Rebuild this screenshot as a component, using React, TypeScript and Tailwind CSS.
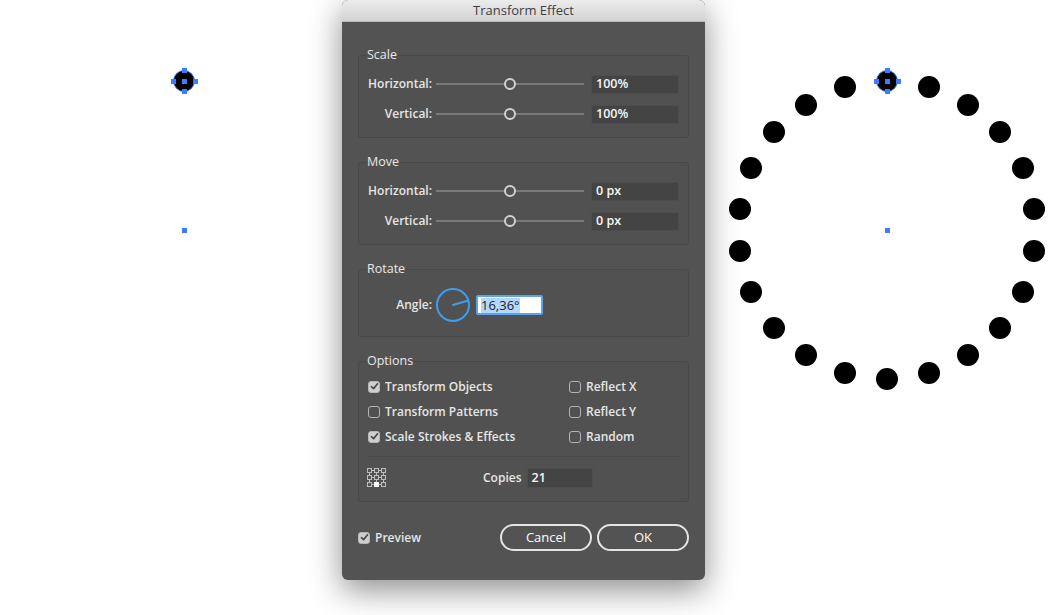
import React from "react";

const BLUE = "bg-[#3d7bff]";

function SelectedDot({ className }: { className: string }) {
  return (
    <div className={`absolute h-[22px] w-[22px] rounded-full border border-[#3d7bff] bg-black ${className}`}>
      <div className={`absolute left-[8px] top-[-3px] h-[5px] w-[5px] ${BLUE}`} />
      <div className={`absolute left-[8px] top-[18px] h-[5px] w-[5px] ${BLUE}`} />
      <div className={`absolute left-[-3px] top-[8px] h-[5px] w-[5px] ${BLUE}`} />
      <div className={`absolute left-[19px] top-[8px] h-[5px] w-[5px] ${BLUE}`} />
      <div className={`absolute left-[8px] top-[8px] h-[5px] w-[5px] ${BLUE}`} />
    </div>
  );
}

function Slider() {
  return (
    <div className="relative ml-[4px] flex h-[20px] w-[148px] items-center">
      <div className="h-[2px] w-full bg-[#7a7a7a]" />
      <div className="absolute left-[68px] top-[4px] h-[12px] w-[12px] rounded-full border-2 border-[#d2d2d2] bg-[#535353]" />
    </div>
  );
}

function SliderRow({ label, value }: { label: string; value: string }) {
  return (
    <div className="flex h-[20px] items-center">
      <span className="w-[73px] text-right">{label}</span>
      <Slider />
      <div className="ml-[7px] flex h-[19px] w-[88px] items-center rounded-[2px] border border-[#4d4d4d] bg-[#444444] px-[4px] text-[12.5px] text-[#f7f7f7]">
        {value}
      </div>
    </div>
  );
}

function Group({
  title,
  className,
  children,
}: {
  title: string;
  className: string;
  children: React.ReactNode;
}) {
  return (
    <fieldset className={`rounded-[3px] border border-[#484848] bg-[#515151] ${className}`}>
      <legend className="ml-[7px] px-[1px] text-[12.5px] font-medium leading-[16px] text-[#e8e8e8]">{title}</legend>
      {children}
    </fieldset>
  );
}

function Check({ checked, label }: { checked?: boolean; label: string }) {
  return (
    <div className="flex h-[17px] items-center">
      {checked ? (
        <span className="flex h-[12px] w-[12px] items-center justify-center rounded-[3px] border border-[#b5b5b5] bg-[#cfcfcf]">
          <svg width="9" height="9" viewBox="0 0 9 9">
            <path d="M1.5 4.6 L3.6 6.7 L7.5 1.8" fill="none" stroke="#454545" strokeWidth="1.6" strokeLinecap="round" strokeLinejoin="round" />
          </svg>
        </span>
      ) : (
        <span className="h-[12px] w-[12px] rounded-[3px] border border-[#b3b3b3]" />
      )}
      <span className="ml-[5px]">{label}</span>
    </div>
  );
}

function GridIcon() {
  const pos = [0, 7, 14];
  return (
    <svg width="21" height="21" viewBox="0 0 21 21">
      {pos.map((y) => (
        <line key={"h" + y} x1="4" y1={y + 2.5} x2="14" y2={y + 2.5} stroke="#bdbdbd" strokeWidth="1" />
      ))}
      {pos.map((x) => (
        <line key={"v" + x} x1={x + 2.5} y1="4" x2={x + 2.5} y2="14" stroke="#bdbdbd" strokeWidth="1" />
      ))}
      {pos.map((y) =>
        pos.map((x) => {
          const filled = x === 7 && y === 14;
          return (
            <rect
              key={x + "-" + y}
              x={x + 0.5}
              y={y + 0.5}
              width="4"
              height="4"
              fill={filled ? "#ffffff" : "#535353"}
              stroke={filled ? "#ffffff" : "#bdbdbd"}
              strokeWidth="1"
            />
          );
        })
      )}
    </svg>
  );
}

export default function App() {
  const dots = Array.from({ length: 21 }, (_, k) => {
    const i = k + 1;
    const a = (i * 2 * Math.PI) / 22;
    return { x: 887 + 149 * Math.sin(a), y: 230 - 149 * Math.cos(a) };
  });

  return (
    <div className="relative h-[615px] w-[1062px] overflow-hidden bg-white font-['Open_Sans','Liberation_Sans',sans-serif]">
      {/* canvas objects */}
      <SelectedDot className="left-[173px] top-[70px]" />
      <div className="absolute left-[182px] top-[228px] h-[5px] w-[5px] bg-[#3d7bff]" />

      {dots.map((d, i) => (
        <div
          key={i}
          className="absolute h-[22px] w-[22px] rounded-full bg-black"
          style={{ left: d.x - 11, top: d.y - 11 }}
        />
      ))}
      <SelectedDot className="left-[876px] top-[70px]" />
      <div className="absolute left-[885px] top-[228px] h-[5px] w-[5px] bg-[#3d7bff]" />

      {/* dialog */}
      <div className="absolute left-[342px] top-0 w-[363px] overflow-hidden rounded-[6px] bg-[#535353] text-[12px] font-semibold text-[#e6e6e6] shadow-[0_10px_32px_rgba(0,0,0,0.45)]">
        <div className="flex h-[22px] items-center justify-center border-b border-[#b9b9b9] bg-gradient-to-b from-[#ececec] to-[#d3d3d3] text-[13px] font-normal text-[#3f3f3f]">
          Transform Effect
        </div>

        <div className="px-[16px] pb-[29px]">
          <Group title="Scale" className="mt-[25px]">
            <div className="flex flex-col gap-[10px] pb-[13px] pt-[11px]">
              <SliderRow label="Horizontal:" value="100%" />
              <SliderRow label="Vertical:" value="100%" />
            </div>
          </Group>

          <Group title="Move" className="mt-[16px]">
            <div className="flex flex-col gap-[10px] pb-[13px] pt-[11px]">
              <SliderRow label="Horizontal:" value="0 px" />
              <SliderRow label="Vertical:" value="0 px" />
            </div>
          </Group>

          <Group title="Rotate" className="mt-[16px]">
            <div className="flex items-center pb-[14px] pt-[11px]">
              <span className="w-[73px] text-right">Angle:</span>
              <svg className="ml-[4px]" width="34" height="34" viewBox="0 0 34 34">
                <circle cx="17" cy="17" r="16" fill="none" stroke="#3d9df0" strokeWidth="2" />
                <line x1="17" y1="17" x2="32.3" y2="12.5" stroke="#3d9df0" strokeWidth="2" strokeLinecap="round" />
              </svg>
              <div className="ml-[6px] flex h-[20px] w-[67px] items-center rounded-[2px] border-2 border-[#5aa3ee] bg-white px-[3px] text-[13px] font-normal text-[#1e1e1e]">
                <span className="bg-[#b4d7fd] leading-[15px]">16,36°</span>
              </div>
            </div>
          </Group>

          <Group title="Options" className="mt-[16px]">
            <div className="grid grid-cols-[201px_1fr] gap-y-[8px] pl-[9px] pt-[9px]">
              <Check checked label="Transform Objects" />
              <Check label="Reflect X" />
              <Check label="Transform Patterns" />
              <Check label="Reflect Y" />
              <Check checked label="Scale Strokes & Effects" />
              <Check label="Random" />
            </div>
            <div className="ml-[8px] mr-[9px] mt-[11px] h-px bg-[#474747]" />
            <div className="mb-[13px] mt-[11px] flex h-[20px] items-center pl-[8px]">
              <GridIcon />
              <span className="ml-[95px]">Copies</span>
              <div className="ml-[5px] flex h-[20px] w-[66px] items-center rounded-[2px] border border-[#4d4d4d] bg-[#444444] px-[4px] text-[12.5px] text-[#f7f7f7]">
                21
              </div>
            </div>
          </Group>

          <div className="mt-[22px] flex h-[27px] items-center">
            <Check checked label="Preview" />
            <div className="ml-auto flex gap-[5px] text-[13px] font-medium text-white">
              <div className="flex h-[27px] w-[92px] items-center justify-center rounded-full border-2 border-[#e4e4e4]">
                Cancel
              </div>
              <div className="flex h-[27px] w-[92px] items-center justify-center rounded-full border-2 border-[#e4e4e4]">
                OK
              </div>
            </div>
          </div>
        </div>
      </div>
    </div>
  );
}
